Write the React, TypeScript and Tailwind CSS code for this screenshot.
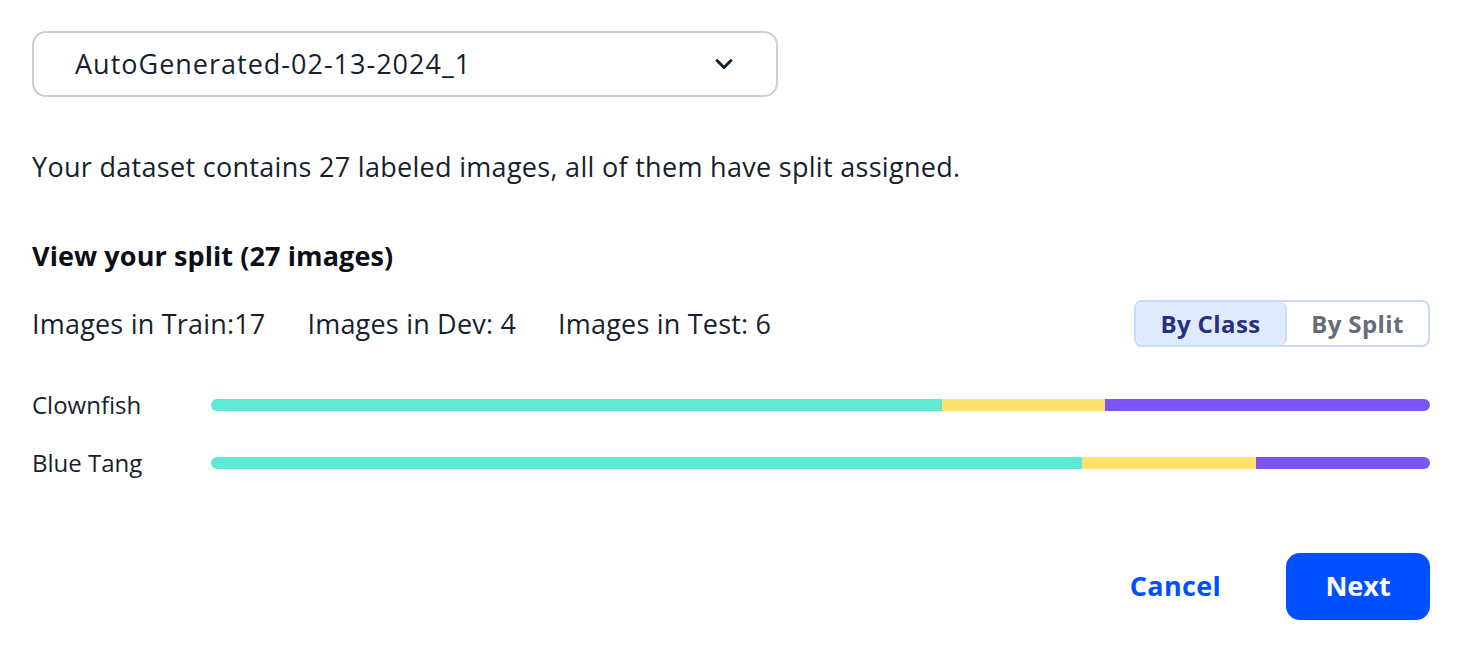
import React from "react";

function Bar({ a, b, c }: { a: number; b: number; c: number }) {
  const t = a + b + c;
  return (
    <div className="flex h-[12px] w-full overflow-hidden rounded-full">
      <div className="h-full bg-[#5CEAD2]" style={{ width: `${(a / t) * 100}%` }} />
      <div className="h-full bg-[#FFE16B]" style={{ width: `${(b / t) * 100}%` }} />
      <div className="h-full bg-[#7B55FA]" style={{ width: `${(c / t) * 100}%` }} />
    </div>
  );
}

export default function App() {
  return (
    <div className="w-[1476px] h-[652px] bg-white text-[#161f2e] pl-[32px] pr-[46px] pt-[31px] font-['Open_Sans','Noto_Sans',sans-serif]">
      <div className="flex h-[66px] w-[746px] items-center justify-between rounded-[14px] border-2 border-[#cfcfcf] pl-[41px] pr-[42px]">
        <span className="text-[27px] leading-[32px] tracking-[1px]">AutoGenerated-02-13-2024_1</span>
        <svg width="20" height="12" viewBox="0 0 20 12" fill="none">
          <path d="M3 2.5l7 7 7-7" stroke="#161f2e" strokeWidth="3" strokeLinecap="round" strokeLinejoin="round" />
        </svg>
      </div>
      <p className="mt-[54px] text-[27px] leading-[32px] tracking-[0.3px]">
        Your dataset contains 27 labeled images, all of them have split assigned.
      </p>
      <h2 className="mt-[57px] text-[27px] font-bold leading-[32px] tracking-[0.1px] text-[#0b0f17]">View your split (27 images)</h2>
      <div className="mt-[28px] flex h-[47px] items-center justify-between">
        <div className="flex gap-[42px] text-[27px] leading-[32px] tracking-[0.2px]">
          <span>Images in Train:17</span>
          <span>Images in Dev: 4</span>
          <span>Images in Test: 6</span>
        </div>
        <div className="flex h-[47px] w-[296px] rounded-[8px] border-2 border-[#c9d8fb] text-[24px] font-bold tracking-[0.4px]">
          <div className="flex w-[151px] items-center justify-center rounded-[7px] border-r-2 border-[#c9d8fb] bg-[#e0eafd] text-[#262f80]">
            By Class
          </div>
          <div className="flex flex-1 items-center justify-center text-[#646c78]">By Split</div>
        </div>
      </div>
      <div className="mt-[42px] flex flex-col gap-[26px] text-[24px]">
        <div className="flex h-[32px] items-center">
          <span className="w-[179px]">Clownfish</span>
          <div className="flex-1"><Bar a={9} b={2} c={4} /></div>
        </div>
        <div className="flex h-[32px] items-center">
          <span className="w-[179px]">Blue Tang</span>
          <div className="flex-1"><Bar a={5} b={1} c={1} /></div>
        </div>
      </div>
      <div className="mt-[74px] flex items-center justify-end gap-[65px]">
        <button className="text-[27px] font-bold tracking-[0.3px] text-[#0050ff]">Cancel</button>
        <button className="h-[67px] w-[144px] rounded-[14px] bg-[#0050ff] text-[27px] font-bold text-white">Next</button>
      </div>
    </div>
  );
}
